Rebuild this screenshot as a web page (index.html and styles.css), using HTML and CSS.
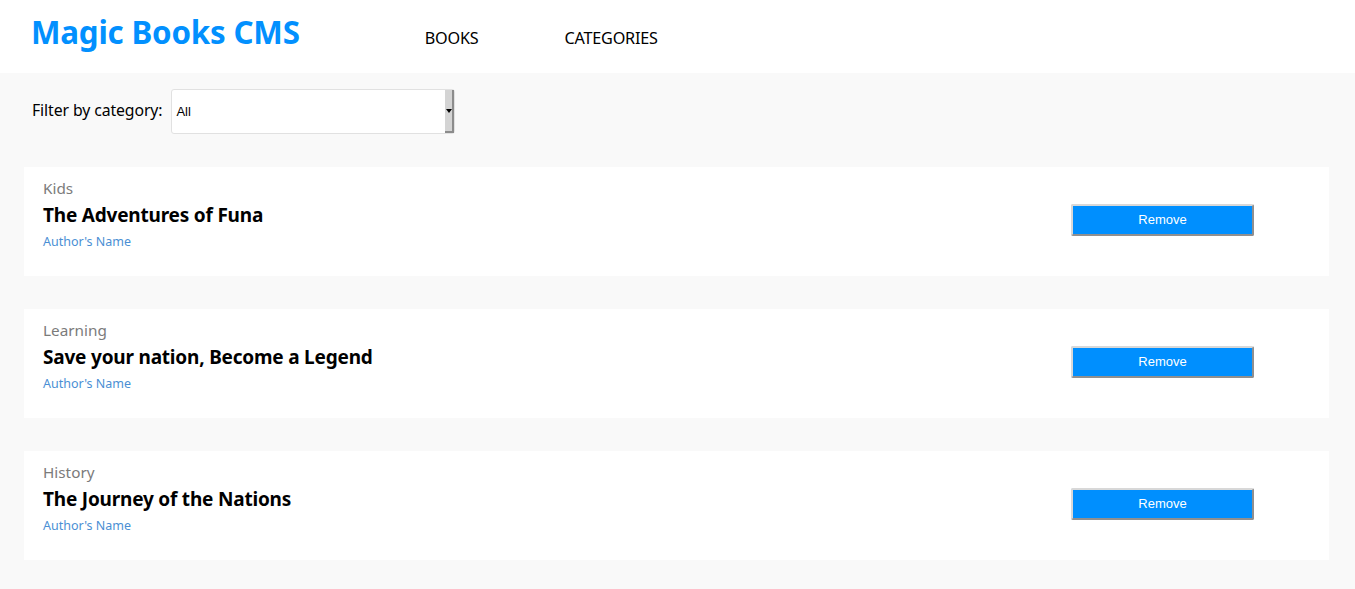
FILE: index.html
```html
<!DOCTYPE html>
<html lang="en">
<head>
<meta charset="utf-8">
<title>Magic Books CMS</title>
<link rel="stylesheet" href="styles.css">
</head>
<body>
<header class="topbar">
  <h1 class="brand">Magic Books CMS</h1>
  <nav class="nav">
    <a class="nav-link" href="#">BOOKS</a>
    <a class="nav-link" href="#">CATEGORIES</a>
  </nav>
</header>
<main class="content">
  <div class="filter">
    <label class="filter-label" for="cat">Filter by category:</label>
    <div class="select-box">
      <span class="select-value" id="cat">All</span>
      <span class="select-btn"><span class="select-arrow"></span></span>
    </div>
  </div>
  <ul class="book-list">
    <li class="book-card">
      <div class="book-info">
        <div class="book-cat">Kids</div>
        <div class="book-title">The Adventures of Funa</div>
        <div class="book-author">Author's Name</div>
      </div>
      <button class="remove-btn">Remove</button>
    </li>
    <li class="book-card">
      <div class="book-info">
        <div class="book-cat">Learning</div>
        <div class="book-title">Save your nation, Become a Legend</div>
        <div class="book-author">Author's Name</div>
      </div>
      <button class="remove-btn">Remove</button>
    </li>
    <li class="book-card">
      <div class="book-info">
        <div class="book-cat">History</div>
        <div class="book-title">The Journey of the Nations</div>
        <div class="book-author">Author's Name</div>
      </div>
      <button class="remove-btn">Remove</button>
    </li>
  </ul>
</main>
</body>
</html>
```
FILE: styles.css
```css
* { box-sizing: border-box; }
html, body { margin: 0; padding: 0; }
body {
  background: #f9f9f9;
  font-family: "Noto Sans", "Open Sans", sans-serif;
  color: #000;
}
.topbar {
  background: #fff;
  height: 73px;
  display: flex;
  align-items: flex-start;
  padding-left: 31px;
}
.brand {
  margin: 11px 0 0 0;
  font-size: 31.3px;
  font-weight: 700;
  color: #0290fe;
  line-height: 42px;
  letter-spacing: -0.2px;
}
.nav {
  display: flex;
  gap: 86px;
  margin-left: 125px;
  padding-top: 27px;
}
.nav-link {
  color: #000;
  text-decoration: none;
  font-size: 16.2px;
  line-height: 22px;
  letter-spacing: -0.2px;
}
.content {
  padding: 16px 26px 0 24px;
}
.filter {
  display: flex;
  align-items: center;
  padding-left: 8px;
  gap: 9px;
}
.filter-label {
  font-size: 15.8px;
  letter-spacing: -0.1px;
  margin-top: -3px;
}
.select-box {
  width: 284px;
  height: 45px;
  background: #fff;
  border: 1px solid #e1e1e1;
  border-radius: 3px;
  display: flex;
  align-items: stretch;
}
.select-value {
  flex: 1;
  display: flex;
  align-items: center;
  padding-left: 4px;
  font-family: "Liberation Sans", Arial, sans-serif;
  font-size: 13px;
  color: #000;
}
.select-btn {
  width: 9px;
  background: #d4d4d4;
  border-right: 2px solid #8c8c8c;
  border-bottom: 2px solid #8c8c8c;
  display: flex;
  align-items: center;
  justify-content: center;
}
.select-arrow {
  width: 0;
  height: 0;
  border-left: 3px solid transparent;
  border-right: 3px solid transparent;
  border-top: 4px solid #000;
}
.book-list {
  list-style: none;
  margin: 33px 0 0 0;
  padding: 0;
  display: flex;
  flex-direction: column;
  gap: 33px;
}
.book-card {
  background: #fff;
  height: 109px;
  display: flex;
  align-items: center;
  justify-content: space-between;
  padding: 0 75px 0 19px;
}
.book-info {
  display: flex;
  flex-direction: column;
  margin-top: -16px;
}
.book-cat {
  color: #7b7b7b;
  font-size: 15.3px;
  line-height: 24px;
}
.book-title {
  font-size: 19px;
  font-weight: 700;
  line-height: 30px;
  letter-spacing: -0.2px;
}
.book-author {
  color: #4a8fd4;
  font-size: 12.5px;
  line-height: 20px;
  margin-top: 2px;
}
.remove-btn {
  width: 183px;
  height: 32px;
  background: #008ffe;
  color: #fff;
  font-family: "Liberation Sans", Arial, sans-serif;
  font-size: 13px;
  border: 2px solid;
  border-color: #d8d8d8 #8f8f8f #8f8f8f #d8d8d8;
  border-radius: 2px;
  padding: 0;
  margin-top: -4px;
}
```
